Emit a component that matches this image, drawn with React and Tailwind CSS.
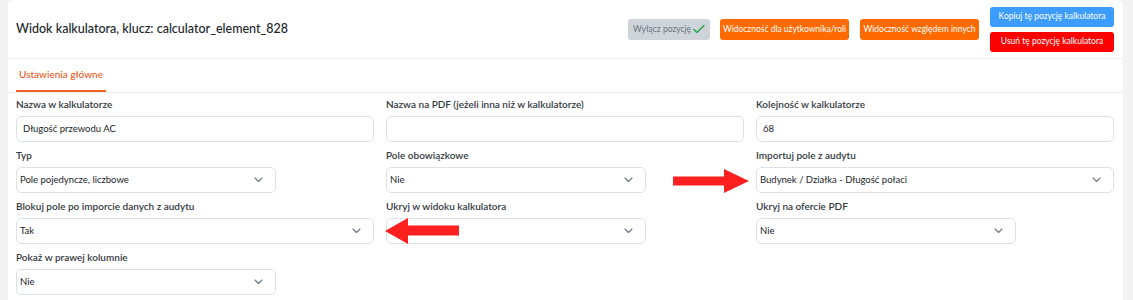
import React from "react";

const font = { fontFamily: 'Lato, "Noto Sans", sans-serif' };

function Chevron() {
  return (
    <svg width="9" height="6" viewBox="0 0 9 6" className="absolute right-[12px] top-1/2 -translate-y-1/2">
      <path d="M1 1l3.5 3.5L8 1" fill="none" stroke="#6c757d" strokeWidth="1.1" strokeLinecap="round" strokeLinejoin="round" />
    </svg>
  );
}

function Input({ value, w = "w-full" }) {
  return (
    <div className={`${w} h-[26px] rounded-[5px] border border-[#dee2e6] bg-white flex items-center pl-[6px] text-[9.5px] text-[#212529]`}>
      {value}
    </div>
  );
}

function Select({ value, w = "w-full" }) {
  return (
    <div className={`${w} relative h-[26px] rounded-[5px] border border-[#dee2e6] bg-white flex items-center pl-[3px] text-[9.5px] text-[#212529]`}>
      {value}
      <Chevron />
    </div>
  );
}

function Field({ label, children }) {
  return (
    <div className="flex flex-col">
      <div className="h-[14px] leading-[14px] mb-[5px] text-[10px] font-semibold text-[#343a40] whitespace-nowrap">{label}</div>
      {children}
    </div>
  );
}

function ArrowRight({ className }) {
  return (
    <svg width="76" height="24" viewBox="0 0 76 24" className={className}>
      <polygon points="0,7.5 51,7.5 51,0 76,12 51,24 51,16.5 0,16.5" fill="#ff2020" />
    </svg>
  );
}

function ArrowLeft({ className }) {
  return (
    <svg width="74" height="26" viewBox="0 0 74 26" className={className}>
      <polygon points="0,13 23,0 23,7.5 74,7.5 74,17.5 23,17.5 23,26" fill="#ff2020" />
    </svg>
  );
}

export default function App() {
  return (
    <div className="w-[1133px] h-[300px] bg-[#f3f3f3] pl-[8px] pr-[10px] overflow-hidden" style={font}>
      <div className="relative bg-white rounded-t-[6px] h-[310px]">
        <div className="h-[59px] flex items-center justify-between pl-[8px] pr-[9px] border-b border-[#f1f1f1]">
          <div className="text-[12.5px] font-medium text-[#212529] mt-[1px]">Widok kalkulatora, klucz: calculator_element_828</div>
          <div className="flex items-center">
            <div className="h-[21px] w-[82px] rounded-[3px] bg-[#ced4da] text-[#6c757d] text-[8.5px] flex items-center justify-center gap-[2px] whitespace-nowrap">
              Wyłącz pozycję
              <svg width="12" height="10" viewBox="0 0 12 10"><path d="M1 5.5l3 3L11 1.5" fill="none" stroke="#28a745" strokeWidth="1.5" strokeLinecap="round" strokeLinejoin="round" /></svg>
            </div>
            <div className="ml-[10px] h-[21px] w-[129px] rounded-[3px] bg-[#ff6a00] text-white text-[8.5px] flex items-center justify-center whitespace-nowrap">Widoczność dla użytkownika/roli</div>
            <div className="ml-[11px] h-[21px] w-[119px] rounded-[3px] bg-[#ff6a00] text-white text-[8.5px] flex items-center justify-center whitespace-nowrap">Widoczność względem innych</div>
            <div className="ml-[11px] flex flex-col gap-[5px]">
              <div className="h-[20px] w-[124px] rounded-[3px] bg-[#3d9cff] text-white text-[8.5px] flex items-center justify-center whitespace-nowrap">Kopiuj tę pozycję kalkulatora</div>
              <div className="h-[20px] w-[124px] rounded-[3px] bg-[#ff0000] text-white text-[8.5px] flex items-center justify-center whitespace-nowrap">Usuń tę pozycję kalkulatora</div>
            </div>
          </div>
        </div>
        <div className="h-[34px] border-b border-[#ececec] px-[8px] flex">
          <div className="h-full px-[3px] flex items-center border-b-2 border-[#f0642a] text-[10px] font-medium text-[#f05a22] -mb-px">Ustawienia główne</div>
        </div>
        <div className="px-[8px] pt-[4px] grid grid-cols-3 gap-x-[12px] gap-y-[6px] w-[1114px]">
          <Field label="Nazwa w kalkulatorze"><Input value="Długość przewodu AC" /></Field>
          <Field label="Nazwa na PDF (jeżeli inna niż w kalkulatorze)"><Input value="" /></Field>
          <Field label="Kolejność w kalkulatorze"><Input value="68" /></Field>
          <Field label="Typ"><Select value="Pole pojedyncze, liczbowe" w="w-[260px]" /></Field>
          <Field label="Pole obowiązkowe"><Select value="Nie" w="w-[260px]" /></Field>
          <Field label="Importuj pole z audytu"><Select value="Budynek / Działka - Długość połaci" /></Field>
          <Field label="Blokuj pole po imporcie danych z audytu"><Select value="Tak" /></Field>
          <Field label="Ukryj w widoku kalkulatora"><Select value="" w="w-[260px]" /></Field>
          <Field label="Ukryj na ofercie PDF"><Select value="Nie" w="w-[260px]" /></Field>
          <Field label="Pokaż w prawej kolumnie"><Select value="Nie" w="w-[260px]" /></Field>
        </div>
        <ArrowRight className="absolute left-[665px] top-[169px]" />
        <ArrowLeft className="absolute left-[377px] top-[218px]" />
      </div>
    </div>
  );
}
